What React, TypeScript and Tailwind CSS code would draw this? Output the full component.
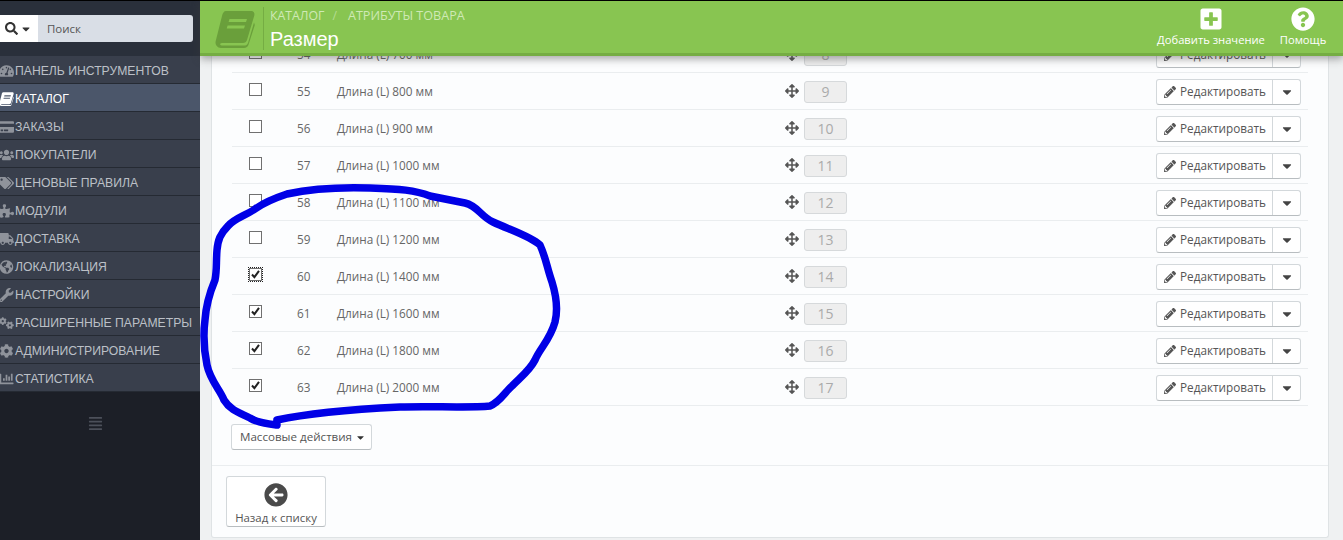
import {
  FaAlignJustify,
  FaArrowCircleLeft,
  FaArrowsAlt,
  FaCaretDown,
  FaChartBar,
  FaCog,
  FaCreditCard,
  FaGlobeAmericas,
  FaPencilAlt,
  FaPlusSquare,
  FaPuzzlePiece,
  FaQuestionCircle,
  FaSearch,
  FaTachometerAlt,
  FaTags,
  FaTruck,
  FaUsers,
  FaWrench,
} from "react-icons/fa"
import { FaGears } from "react-icons/fa6"

// slanted book, the package's one stands upright
function BookIcon({ className }: { className?: string }) {
  return (
    <svg viewBox="0 0 40 38" className={className} fill="currentColor">
      <path d="M11 1 H36 C38.5 1 40 3 39.3 5.5 L32 30 C31.4 32 30 33 28 33 H7 C5.5 33 5 34 5.2 34.6 C5.5 35.4 6.3 35.6 7.5 35.6 H29 C31 35.6 32.4 34.6 33 33 L39 12.5 L39.8 15 L33.6 34.5 C33 36.6 31.2 38 29 38 H6 C2.5 38 0 35 0.6 31.5 L7 6 C7.6 3 9 1 11 1 Z M14.5 9 L13.6 12 H31 L32 9 Z M12.6 15.5 L11.7 18.5 H29 L30 15.5 Z" fillRule="evenodd" />
    </svg>
  )
}

const menu = [
  { label: "ПАНЕЛЬ ИНСТРУМЕНТОВ", icon: FaTachometerAlt },
  { label: "КАТАЛОГ", icon: BookIcon, active: true },
  { label: "ЗАКАЗЫ", icon: FaCreditCard },
  { label: "ПОКУПАТЕЛИ", icon: FaUsers },
  { label: "ЦЕНОВЫЕ ПРАВИЛА", icon: FaTags },
  { label: "МОДУЛИ", icon: FaPuzzlePiece },
  { label: "ДОСТАВКА", icon: FaTruck },
  { label: "ЛОКАЛИЗАЦИЯ", icon: FaGlobeAmericas },
  { label: "НАСТРОЙКИ", icon: FaWrench },
  { label: "РАСШИРЕННЫЕ ПАРАМЕТРЫ", icon: FaGears },
  { label: "АДМИНИСТРИРОВАНИЕ", icon: FaCog },
  { label: "СТАТИСТИКА", icon: FaChartBar },
]

const rows = [
  { id: 54, name: "Длина (L) 700 мм", pos: 8 },
  { id: 55, name: "Длина (L) 800 мм", pos: 9 },
  { id: 56, name: "Длина (L) 900 мм", pos: 10 },
  { id: 57, name: "Длина (L) 1000 мм", pos: 11 },
  { id: 58, name: "Длина (L) 1100 мм", pos: 12 },
  { id: 59, name: "Длина (L) 1200 мм", pos: 13 },
  { id: 60, name: "Длина (L) 1400 мм", pos: 14, checked: true, focus: true },
  { id: 61, name: "Длина (L) 1600 мм", pos: 15, checked: true },
  { id: 62, name: "Длина (L) 1800 мм", pos: 16, checked: true },
  { id: 63, name: "Длина (L) 2000 мм", pos: 17, checked: true },
]

function Checkbox({ checked, focus }: { checked?: boolean; focus?: boolean }) {
  return (
    <span className={`block w-[13px] h-[13px] ${focus ? "outline-1 outline-dotted outline-[#222]" : ""}`}>
      <span className="block w-[13px] h-[13px] border border-[#707070] bg-white">
        {checked && (
          <svg viewBox="0 0 11 11" className="w-[11px] h-[11px]">
            <path d="M2 5.5 L4.4 8.2 L9 1.8" fill="none" stroke="#222" strokeWidth="2" />
          </svg>
        )}
      </span>
    </span>
  )
}

function Row({ row }: { row: (typeof rows)[number] }) {
  return (
    <div className="flex items-center h-[37px] pt-[1px] border-b border-[#eaedef] text-[11.75px] text-[#666]">
      <div className="w-[65px] pl-[17px] -mt-[4px]">
        <Checkbox checked={row.checked} focus={row.focus} />
      </div>
      <div className="w-[40px]">{row.id}</div>
      <div className="w-[448px]">{row.name}</div>
      <FaArrowsAlt className="w-[14px] h-[14px] text-[#555] -mt-[1px]" />
      <div className="ml-[5px] w-[43px] h-[22px] flex items-center justify-center rounded-[3px] border border-[#d6d9db] bg-[#eeeeee] text-[#aaa] text-[14px]">
        {row.pos}
      </div>
      <div className="ml-auto mr-[7px] flex h-[26px] rounded-[3px] border border-[#d3d8db] border-b-[#b8bdc0] bg-white text-[#555]">
        <div className="w-[116px] flex items-center pl-[7px] gap-[4px] border-r border-[#d3d8db]">
          <FaPencilAlt className="w-[12px] h-[12px] text-[#555]" />
          <span>Редактировать</span>
        </div>
        <div className="w-[27px] flex items-center justify-center">
          <FaCaretDown className="w-[14px] h-[14px] text-[#444]" />
        </div>
      </div>
    </div>
  )
}

export default function App() {
  return (
    <div className="relative flex w-[1343px] h-[540px] overflow-hidden bg-[#eff1f2] font-['Open_Sans',sans-serif]">
      <aside className="w-[200px] h-full shrink-0 bg-[#1c1f27] font-['Liberation_Sans',sans-serif] text-[12.2px]">
        <div className="h-[56px] pt-[14px] bg-[#2a303b] border-t border-black">
          <div className="w-[193px] h-[27px] flex rounded-r-[3px] bg-[#d9dee6] text-[11.5px] text-[#555]">
            <div className="w-[38px] flex items-center pl-[5px] gap-[2px] bg-white text-[#333]">
              <FaSearch className="w-[13px] h-[13px] shrink-0" />
              <FaCaretDown className="w-[12px] h-[12px] shrink-0" />
            </div>
            <div className="flex items-center pl-[9px] font-['Open_Sans',sans-serif]">Поиск</div>
          </div>
        </div>
        <nav>
          {menu.map((item) => {
            const Icon = item.icon
            return (
              <div
                key={item.label}
                className={`flex items-center h-[28px] pt-[3px] border-b border-[#252a33] ${
                  item.active ? "bg-[#4b566a] text-white" : "bg-[#393f4c] text-[#bcc0c7]"
                }`}
              >
                <span className="w-[15px] flex justify-start -ml-[1px] mr-[1px]">
                  <Icon className={`w-[15px] h-[14px] ${item.active ? "text-white" : "text-[#8f939b]"}`} />
                </span>
                <span className="whitespace-nowrap">{item.label}</span>
              </div>
            )
          })}
        </nav>
        <div className="flex justify-center pt-[24px] pr-[10px]">
          <FaAlignJustify className="w-[15px] h-[15px] text-[#4c505a]" />
        </div>
      </aside>

      <main className="flex-1 pt-[36px] pl-[11px] pr-[14px]">
        <div className="bg-[#fcfdfe] border-x border-b border-[#dfe3e5] rounded-b-[3px] h-[502px]">
          <div className="pl-[20px] pr-[20px]">
            {rows.map((row) => (
              <Row key={row.id} row={row} />
            ))}
            <button className="mt-[18px] -ml-[1px] flex items-center gap-[3px] h-[26px] w-[141px] pl-[8px] rounded-[3px] border border-[#d3d8db] border-b-[#b8bdc0] bg-white text-[11.6px] text-[#555]">
              Массовые действия
              <FaCaretDown className="w-[11px] h-[11px] text-[#333]" />
            </button>
          </div>
          <div className="mt-[15px] border-t border-[#eaedef] pt-[10px] pl-[14px]">
            <button className="w-[100px] h-[51px] flex flex-col items-center pt-[6px] rounded-[3px] border border-[#d3d8db] border-b-[#b8bdc0] bg-white text-[11.4px] text-[#555]">
              <FaArrowCircleLeft className="w-[24px] h-[24px] text-[#4a4a4a]" />
              <span className="mt-[2px]">Назад к списку</span>
            </button>
          </div>
        </div>
      </main>

      <header className="absolute left-[200px] right-0 top-0 h-[56px] flex justify-between border-t border-black border-b-[3px] border-b-[#75ad43] bg-[#88c551] shadow-[0_3px_8px_rgba(60,60,60,0.45)] text-white">
        <div className="flex">
          <BookIcon className="ml-[15px] mt-[9px] w-[40px] h-[38px] text-[#6a9f3b]" />
          <div className="ml-[8px] mt-[6px] h-[43px] border-l border-[#75ad43] pl-[6px]">
            <div className="flex text-[12.3px] leading-[18px] text-[#cfe9b5]">
              <span>КАТАЛОГ</span>
              <span className="ml-[8px] text-[#b5dc92]">/</span>
              <span className="ml-[11px] text-[12.6px]">АТРИБУТЫ ТОВАРА</span>
            </div>
            <div className="text-[20px] leading-[26px] font-['Liberation_Sans',sans-serif] mt-[1px]">Размер</div>
          </div>
        </div>
        <div className="flex text-[11.2px] leading-[16px] pr-[17px]">
          <div className="flex flex-col items-center pt-[7px] w-[108px]">
            <FaPlusSquare className="w-[24px] h-[24px] my-[-1px]" />
            <span className="mt-[2px] whitespace-nowrap">Добавить значение</span>
          </div>
          <div className="flex flex-col items-center pt-[7px] w-[46px] ml-[15px]">
            <FaQuestionCircle className="w-[24px] h-[24px] my-[-1px]" />
            <span className="mt-[2px]">Помощь</span>
          </div>
        </div>
      </header>

      <svg className="absolute inset-0 pointer-events-none" width="1343" height="540" viewBox="0 0 1343 540">
        <path
          d="M277 420 C300 415 340 410 400 407 C430 406 470 408 490 406 C500 402 505 392 512 386 C522 376 530 370 535 360 C540 348 550 340 555 322 C558 310 556 295 552 282 C547 268 546 258 540 245 C530 236 510 230 493 222 C480 216 478 206 465 203 C450 200 440 198 430 196 C415 190 400 189 370 188 C340 187 310 189 287 194 C275 198 262 204 255 209 C245 216 235 218 228 226 C220 234 218 240 217 250 C216 262 217 270 215 280 C210 292 206 305 205 320 C203 335 204 350 207 365 C210 380 220 390 224 400 C230 410 240 413 250 418 C258 423 268 424 277 425"
          fill="none"
          stroke="#0000e6"
          strokeWidth="7.5"
          strokeLinecap="round"
          strokeLinejoin="round"
        />
      </svg>
    </div>
  )
}
